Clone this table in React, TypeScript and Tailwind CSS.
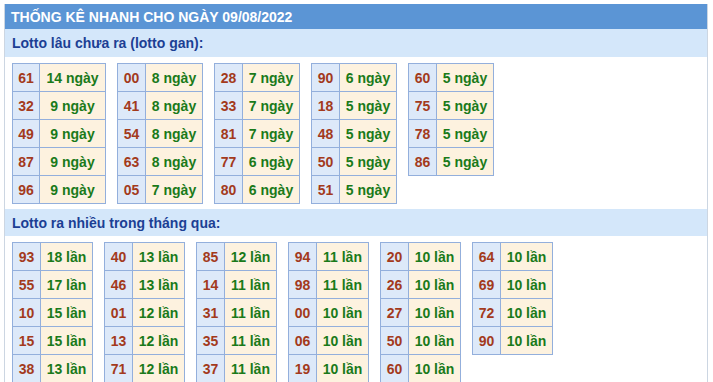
import React from 'react';

type Row = [string, string];

const ganTables: { day: number; rows: Row[] }[] = [
  { day: 65, rows: [['61', '14'], ['32', '9'], ['49', '9'], ['87', '9'], ['96', '9']] },
  { day: 56, rows: [['00', '8'], ['41', '8'], ['54', '8'], ['63', '8'], ['05', '7']] },
  { day: 56, rows: [['28', '7'], ['33', '7'], ['81', '7'], ['77', '6'], ['80', '6']] },
  { day: 56, rows: [['90', '6'], ['18', '5'], ['48', '5'], ['50', '5'], ['51', '5']] },
  { day: 56, rows: [['60', '5'], ['75', '5'], ['78', '5'], ['86', '5']] },
];

const hotTables: Row[][] = [
  [['93', '18'], ['55', '17'], ['10', '15'], ['15', '15'], ['38', '13']],
  [['40', '13'], ['46', '13'], ['01', '12'], ['13', '12'], ['71', '12']],
  [['85', '12'], ['14', '11'], ['31', '11'], ['35', '11'], ['37', '11']],
  [['94', '11'], ['98', '11'], ['00', '10'], ['06', '10'], ['19', '10']],
  [['20', '10'], ['26', '10'], ['27', '10'], ['50', '10'], ['60', '10']],
  [['64', '10'], ['69', '10'], ['72', '10'], ['90', '10']],
];

// bảng nhỏ: cột số + cột ngày/lần, kẻ ô bằng gap 1px trên nền màu viền
const MiniTable = ({ rows, unit, wide }: { rows: Row[]; unit: string; wide?: boolean }) => (
  <div
    className={`grid gap-px p-px bg-[#93afdc] self-start auto-rows-[27px] ${
      unit === 'lần' ? 'grid-cols-[27px_51px]' : wide ? 'grid-cols-[26px_65px]' : 'grid-cols-[27px_56px]'
    }`}
  >
    {rows.map(([num, count]) => (
      <React.Fragment key={num}>
        <div className="bg-[#dde9f9] text-[#a33a1c] flex items-center justify-center">{num}</div>
        <div className="bg-[#fdf2df] text-[#1a7a1a] flex items-center justify-center whitespace-nowrap">
          {count} {unit}
        </div>
      </React.Fragment>
    ))}
  </div>
);

export default function App() {
  return (
    <div className="min-h-screen bg-white pt-[4px] pl-[4px] font-['Liberation_Sans',Arial,sans-serif] font-bold text-[14px] leading-none">
      <div className="w-[704px] border-x border-[#ccd6e2] h-[380px] overflow-hidden">
        <div className="h-[25px] bg-[#5b95d5] text-white flex items-center pl-[6px]">
          THỐNG KÊ NHANH CHO NGÀY 09/08/2022
        </div>

        <div className="h-[28px] bg-[#d4e7fa] text-[#1c3f94] flex items-center pl-[7px]">
          Lotto lâu chưa ra (lotto gan):
        </div>
        <div className="flex gap-[11px] pl-[7px] pt-[6px] pb-[5px]">
          {ganTables.map((t, i) => (
            <MiniTable key={i} rows={t.rows} unit="ngày" wide={i === 0} />
          ))}
        </div>

        <div className="h-[27px] bg-[#d4e7fa] text-[#1c3f94] flex items-center pl-[7px]">
          Lotto ra nhiều trong tháng qua:
        </div>
        <div className="flex gap-[11px] pl-[7px] pt-[6px]">
          {hotTables.map((rows, i) => (
            <MiniTable key={i} rows={rows} unit="lần" />
          ))}
        </div>
      </div>
    </div>
  );
}
